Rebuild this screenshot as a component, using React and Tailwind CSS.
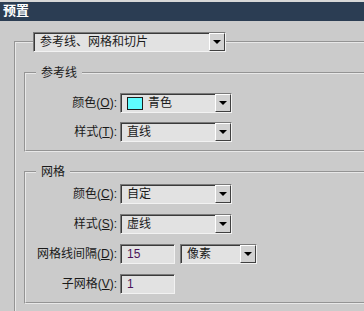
import React from 'react';

const font = "font-['Liberation_Sans','Noto_Sans_CJK_SC',sans-serif]";

const Arrow = () => (
  <div className="ml-auto flex h-[18px] w-[16px] shrink-0 items-center justify-center border border-t-white border-l-white border-b-[#404040] border-r-[#404040] bg-[#d2d2d2]">
    <span className="block h-0 w-0 border-x-[4px] border-t-[4px] border-x-transparent border-t-black" />
  </div>
);

// sunken box shared by combos and text fields
const Sunken = ({ className, children }) => (
  <div
    className={`flex h-[20px] items-center border border-t-[#7a7a7a] border-l-[#7a7a7a] border-b-[#f2f2f2] border-r-[#f2f2f2] bg-[#e2e2e2] shadow-[inset_1px_1px_0_#3a3a3a] ${className}`}
  >
    {children}
  </div>
);

const Combo = ({ className, children }) => (
  <Sunken className={className}>
    <div className="flex min-w-0 flex-1 items-center pl-[6px] text-[12px] leading-[14px] text-[#1a1a1a]">
      {children}
    </div>
    <Arrow />
  </Sunken>
);

const Label = ({ text, hot }) => (
  <div className="w-[94px] shrink-0 whitespace-nowrap pr-[3px] text-right text-[12px] leading-[14px] text-[#1a1a1a]">
    {text}(<span className="underline">{hot}</span>):
  </div>
);

const Row = ({ className, children }) => (
  <div className={`flex h-[20px] items-center ${className}`}>{children}</div>
);

const Group = ({ title, className, children }) => (
  <fieldset className={`ml-[8px] w-[380px] [border-width:2px] [border-style:groove] border-[#e8e8e8] pb-[8px] ${className}`}>
    <legend className="ml-[10px] px-[5px] text-[12px] leading-[14px] text-[#1a1a1a]">{title}</legend>
    {children}
  </fieldset>
);

export default function App() {
  return (
    <div className={`h-[311px] w-[364px] overflow-hidden bg-[#cbcbcb] ${font}`}>
      <div className="h-[21px] border-t-2 border-[#d8d8d8] bg-[#2b3d53] pl-[3px] text-[13px] font-bold leading-[18px] text-white">
        预置
      </div>

      <fieldset className="ml-[14px] mt-[11px] w-[400px] [border-width:2px] [border-style:groove] border-[#e8e8e8] pb-[20px]">
        <legend className="ml-[17px]">
          <Combo className="w-[193px]">参考线、网格和切片</Combo>
        </legend>

        <Group title="参考线" className="mt-[14px]">
          <Row className="mt-[13px]">
            <Label text="颜色" hot="O" />
            <Combo className="w-[112px]">
              <span className="mr-[5px] block h-[13px] w-[16px] border border-[#1e1e1e] bg-[#5ffcff]" />
              青色
            </Combo>
          </Row>
          <Row className="mt-[9px]">
            <Label text="样式" hot="T" />
            <Combo className="w-[112px]">直线</Combo>
          </Row>
        </Group>

        <Group title="网格" className="mt-[13px]">
          <Row className="mt-[5px]">
            <Label text="颜色" hot="C" />
            <Combo className="w-[112px]">自定</Combo>
          </Row>
          <Row className="mt-[10px]">
            <Label text="样式" hot="S" />
            <Combo className="w-[112px]">虚线</Combo>
          </Row>
          <Row className="mt-[10px]">
            <Label text="网格线间隔" hot="D" />
            <Sunken className="w-[55px] pl-[6px] text-[12px] leading-[14px] text-[#4a1458]">15</Sunken>
            <Combo className="ml-[5px] w-[77px]">像素</Combo>
          </Row>
          <Row className="mt-[10px]">
            <Label text="子网格" hot="V" />
            <Sunken className="w-[55px] pl-[6px] text-[12px] leading-[14px] text-[#4a1458]">1</Sunken>
          </Row>
        </Group>
      </fieldset>
    </div>
  );
}
